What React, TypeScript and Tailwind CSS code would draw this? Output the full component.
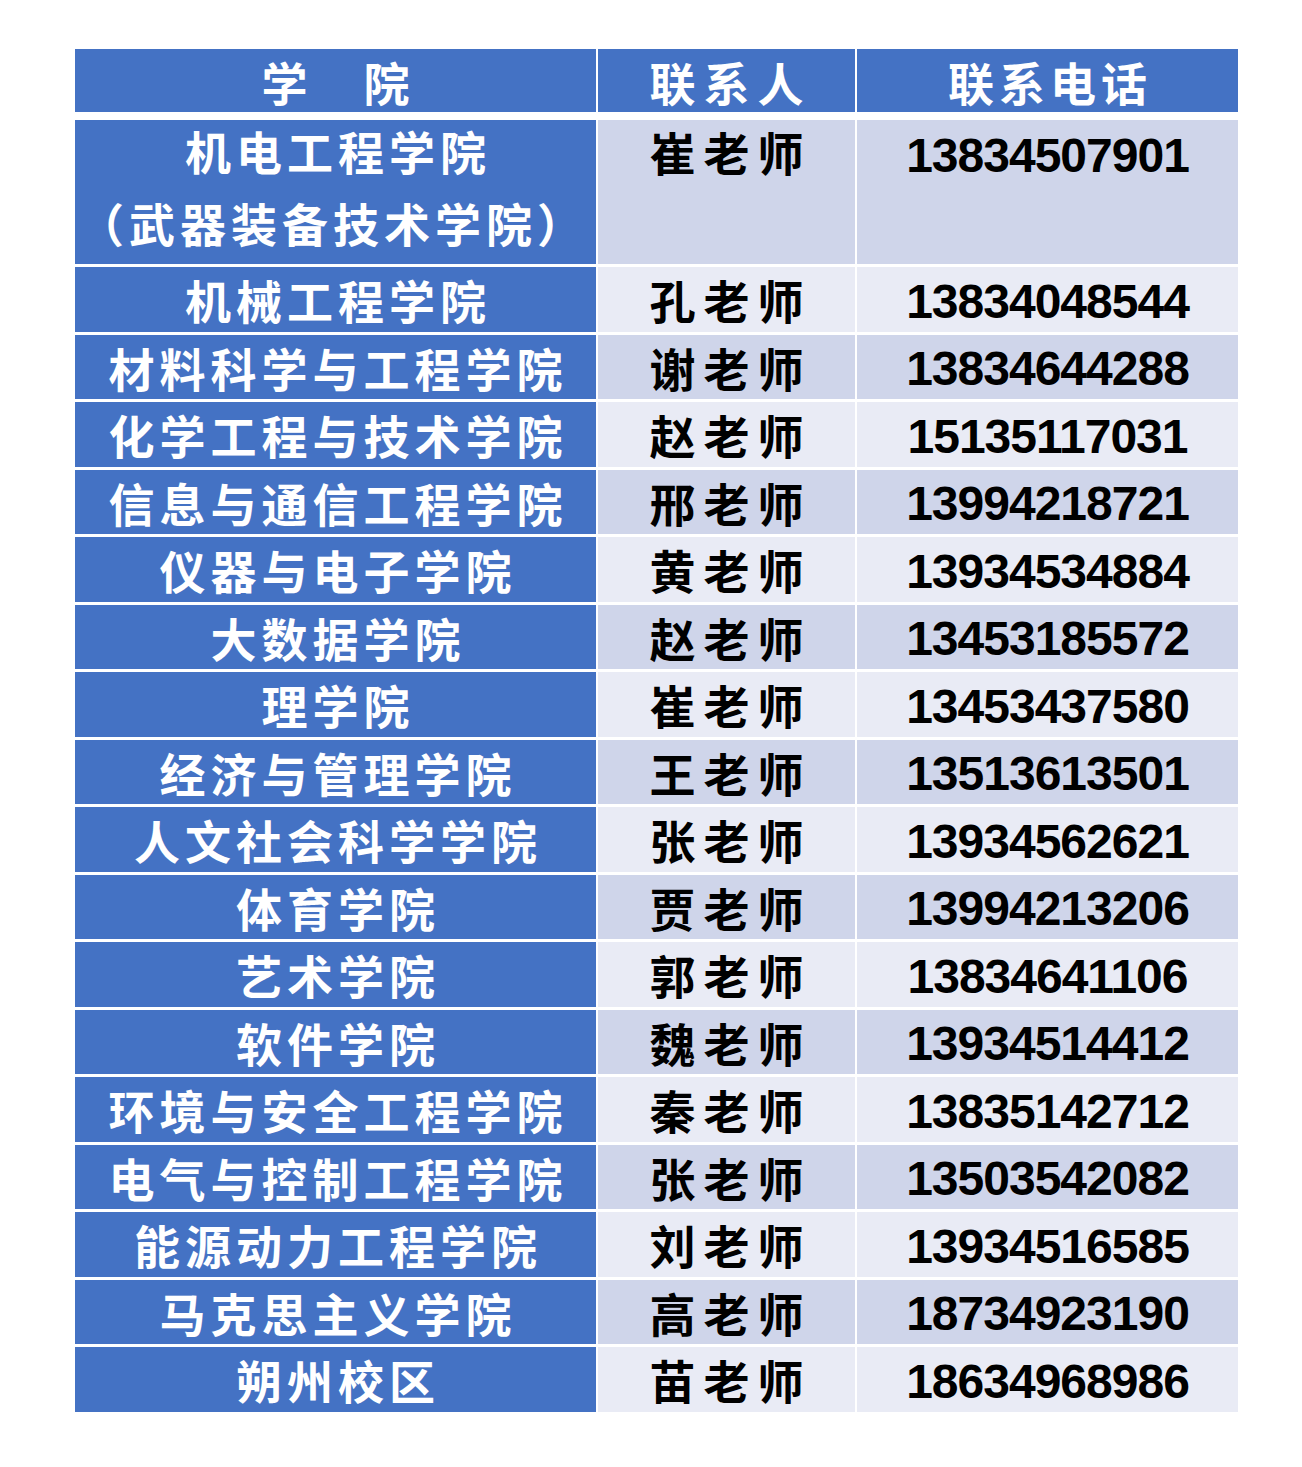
const rows: [string, string, string][] = [
    ["机械工程学院", "孔老师", "13834048544"],
    ["材料科学与工程学院", "谢老师", "13834644288"],
    ["化学工程与技术学院", "赵老师", "15135117031"],
    ["信息与通信工程学院", "邢老师", "13994218721"],
    ["仪器与电子学院", "黄老师", "13934534884"],
    ["大数据学院", "赵老师", "13453185572"],
    ["理学院", "崔老师", "13453437580"],
    ["经济与管理学院", "王老师", "13513613501"],
    ["人文社会科学学院", "张老师", "13934562621"],
    ["体育学院", "贾老师", "13994213206"],
    ["艺术学院", "郭老师", "13834641106"],
    ["软件学院", "魏老师", "13934514412"],
    ["环境与安全工程学院", "秦老师", "13835142712"],
    ["电气与控制工程学院", "张老师", "13503542082"],
    ["能源动力工程学院", "刘老师", "13934516585"],
    ["马克思主义学院", "高老师", "18734923190"],
    ["朔州校区", "苗老师", "18634968986"],
];

const cjk = "font-['Noto_Sans_CJK_SC',sans-serif] font-bold text-[46px] leading-none tracking-[5px] pl-[5px]";
const who = "font-['Noto_Sans_CJK_SC',sans-serif] font-bold text-[46px] leading-none tracking-[8px] pl-[8px]";
const num = "font-['Liberation_Sans',sans-serif] font-bold text-[48px] leading-none tracking-[-1px] text-black";

const blue = "bg-[#4472c4] text-white flex items-center justify-center";

export default function App() {
    return (
        <div className="w-[1302px] h-[1467px] bg-white pt-[49px] pl-[75px]">
            <div className="w-[1163px] flex flex-col">
                {/* header */}
                <div className="grid grid-cols-[521px_257px_381px] gap-x-[2px] h-[63px]">
                    <div className={`${blue} ${cjk}`}>学　院</div>
                    <div className={`${blue} ${who}`}>联系人</div>
                    <div className={`${blue} ${cjk}`}>联系电话</div>
                </div>

                {/* first row, two lines */}
                <div className="grid grid-cols-[521px_257px_381px] gap-x-[2px] h-[144px] mt-[8px]">
                    <div className={`bg-[#4472c4] text-white flex flex-col items-center ${cjk}`}>
                        <span className="leading-[60px]">机电工程学院</span>
                        <span className="leading-[84px] -ml-[10px]">（武器装备技术学院）</span>
                    </div>
                    <div className={`bg-[#cfd5ea] text-black flex justify-center pt-[8px] ${who}`}>崔老师</div>
                    <div className={`bg-[#cfd5ea] flex justify-center pt-[12px] ${num}`}>13834507901</div>
                </div>

                {rows.map(([college, name, phone], i) => {
                    const light = i % 2 === 0 ? "bg-[#e9ebf5]" : "bg-[#cfd5ea]";
                    return (
                        <div key={i} className="grid grid-cols-[521px_257px_381px] gap-x-[2px] h-[64.5px] mt-[3px]">
                            <div className={`${blue} ${cjk}`}>{college}</div>
                            <div className={`${light} text-black flex items-center justify-center ${who}`}>{name}</div>
                            <div className={`${light} flex items-center justify-center pt-[5px] ${num}`}>{phone}</div>
                        </div>
                    );
                })}
            </div>
        </div>
    );
}
